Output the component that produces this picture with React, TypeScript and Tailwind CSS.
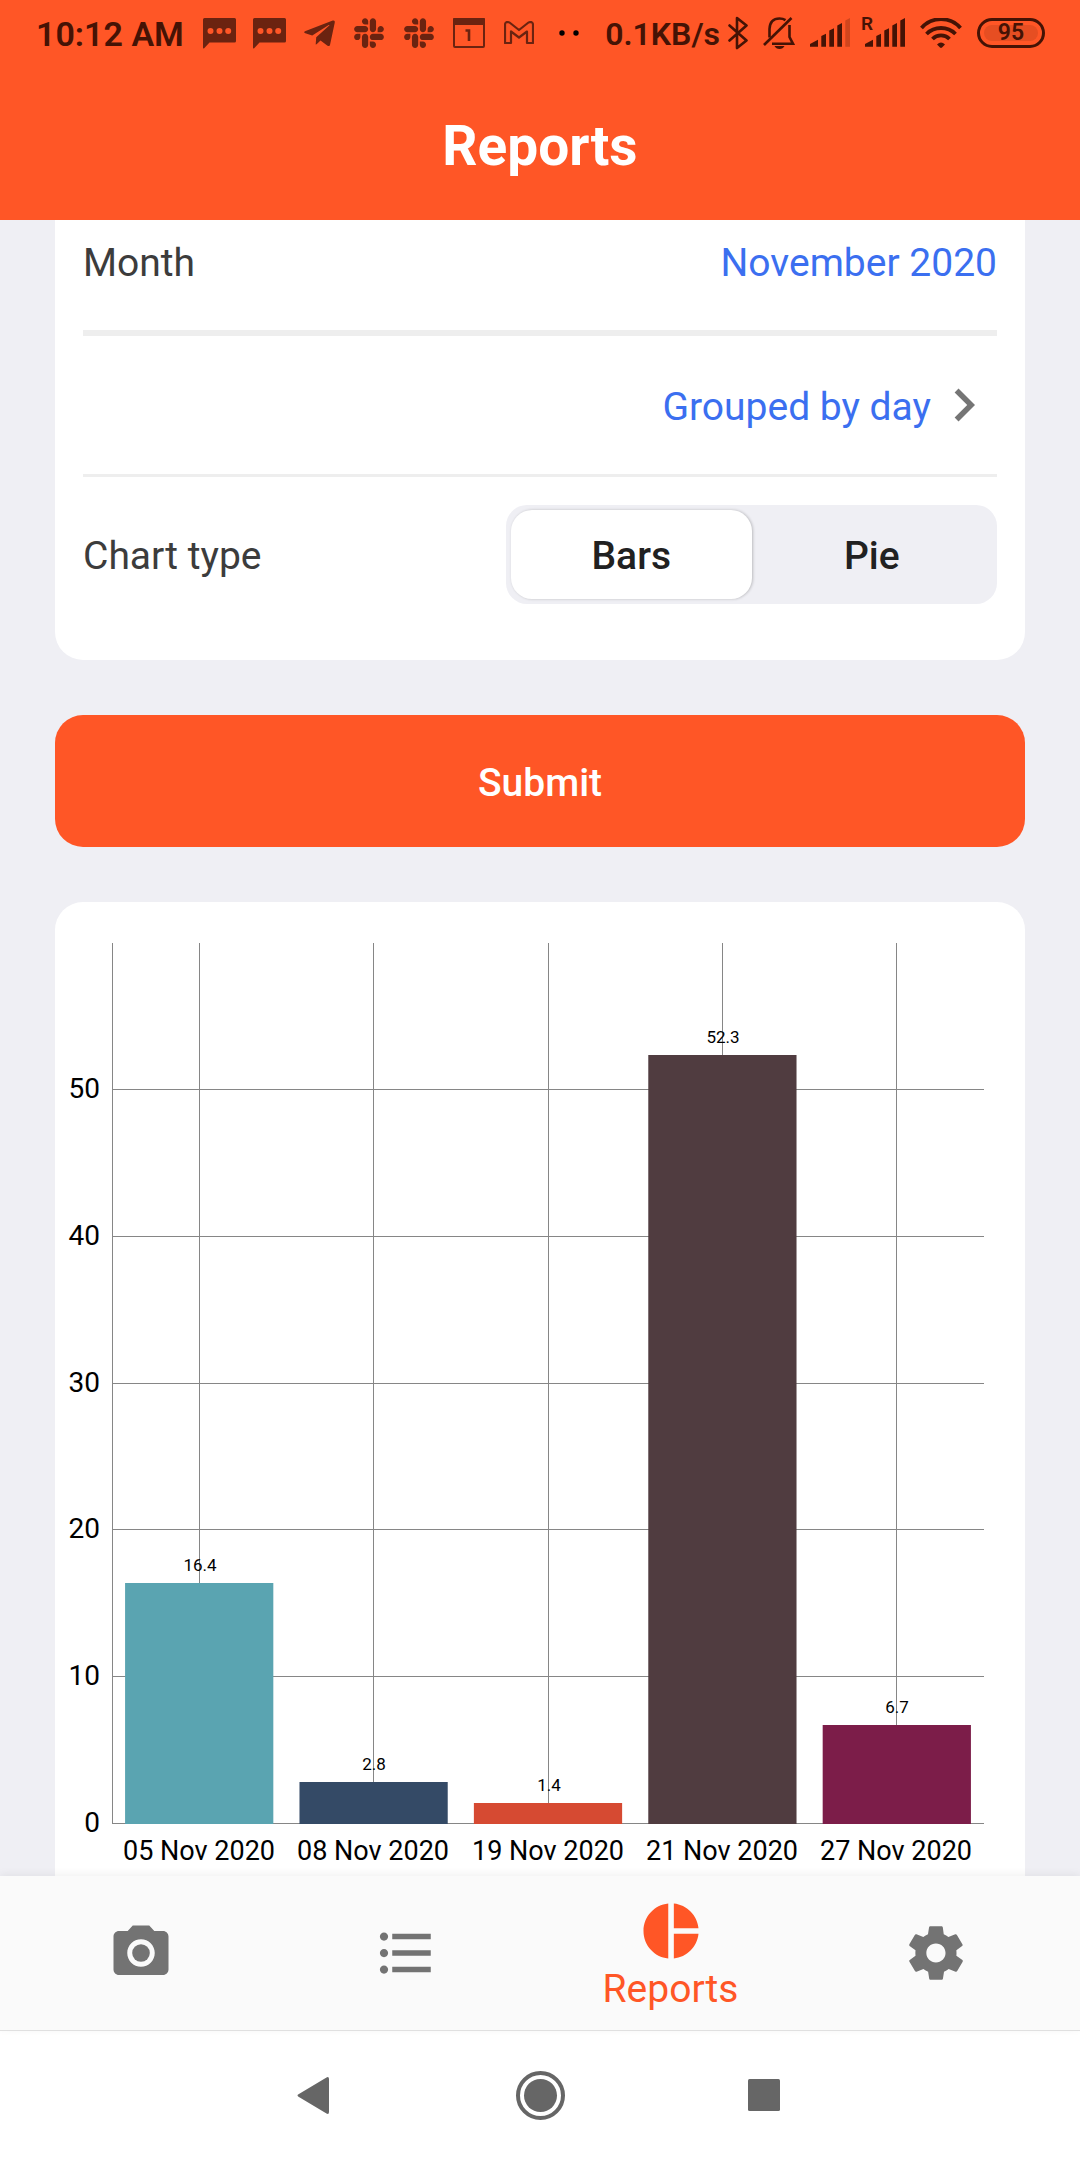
import { useState } from "react";
import type { ReactNode } from "react";
import { FaSlack, FaTelegramPlane } from "react-icons/fa";
import { IoMdSettings } from "react-icons/io";
import {
  MdChevronRight,
  MdFormatListBulleted,
  MdPhotoCamera,
  MdPieChart,
} from "react-icons/md";

function MessageIcon() {
  return (
    <svg width="33" height="31" viewBox="0 0 33 31" fill="currentColor">
      <path
        fillRule="evenodd"
        d="M1.500 0H31.500Q33 0 33 1.500V23Q33 24.500 31.500 24.500H6.500L1.200 30.300Q0 31 0 29.500V1.500Q0 0 1.500 0ZM7.500 10a3 3 0 1 0 0 6a3 3 0 1 0 0-6ZM16.500 10a3 3 0 1 0 0 6a3 3 0 1 0 0-6ZM25.200 10a3 3 0 1 0 0 6a3 3 0 1 0 0-6Z"
      />
    </svg>
  );
}

function CalendarIcon() {
  return (
    <svg width="32" height="30" viewBox="0 0 32 30" fill="none">
      <rect x="1" y="1" width="30" height="28" rx="1" stroke="currentColor" strokeWidth="2" />
      <rect width="32" height="7" rx="1" fill="currentColor" />
      <path d="M12.500 12.500H16V23" stroke="currentColor" strokeWidth="2.600" />
    </svg>
  );
}

function MailIcon() {
  return (
    <svg width="30" height="24" viewBox="0 0 30 24" fill="none">
      <path
        d="M1 22V3.500Q1.200 1 3.500 1L5.500 1.500L15 9L24.500 1.500L26.500 1Q28.800 1 29 3.500V22H23V10.500L15 16.500L7 10.500V22Z"
        stroke="currentColor"
        strokeWidth="2.200"
        strokeLinejoin="round"
      />
    </svg>
  );
}

function MoreIcon() {
  return (
    <svg width="20" height="6" viewBox="0 0 20 6" fill="#000">
      <circle cx="3" cy="3" r="2.700" />
      <circle cx="17" cy="3" r="2.700" />
    </svg>
  );
}

function BluetoothIcon() {
  return (
    <svg width="20" height="34" viewBox="0 0 20 34" fill="none" stroke="currentColor" strokeWidth="2.600" strokeLinejoin="round" strokeLinecap="round">
      <path d="M1.500 9.500L18.500 24.500L9 32V2L18.500 9.500L1.500 24.500" />
    </svg>
  );
}

function MutedBellIcon() {
  return (
    <svg width="32" height="32" viewBox="0 0 32 32" fill="none" stroke="currentColor" strokeWidth="2.600">
      <path d="M6.500 20.500V12Q7 1.500 16.500 1.500Q20 1.500 22.500 3.200" />
      <path d="M26.500 8V20L30 26.800H9" />
      <path d="M1 28L28.500 1" />
      <path d="M11.500 29H21.500Q20 32 16.500 32Q13 32 11.500 29Z" fill="currentColor" stroke="none" />
    </svg>
  );
}

function SignalIcon({ full = false }: { full?: boolean }) {
  return (
    <svg width="40" height="30" viewBox="0 0 40 30" fill="currentColor">
      <path d="M0 28.700V26L8 21.700V28.700Z" />
      <path d="M11.300 28.700V18L16 15.700V28.700Z" />
      <path d="M19.300 28.700V12.500L24 10.200V28.700Z" />
      <path d="M27.300 28.700V7.500L32 5V28.700Z" />
      <path d="M35.300 28.700V2.500L40 0V28.700Z" opacity={full ? 1 : 0.25} />
    </svg>
  );
}

function WifiIcon() {
  return (
    <svg width="42" height="30" viewBox="0 0 42 30" fill="none" stroke="currentColor" strokeWidth="3.800">
      <path d="M1.500 10A26 26 0 0 1 40.500 10" />
      <path d="M6.500 16A20.500 20.500 0 0 1 35.500 16" />
      <path d="M12.500 21A12 12 0 0 1 29.500 21" />
      <path d="M17 26.500Q21 22.500 25 26.500L22 29.500Q21 30.300 20 29.500Z" fill="currentColor" stroke="none" />
    </svg>
  );
}

function StatusBar() {
  const notifications: ReactNode[] = [
    <MessageIcon />,
    <MessageIcon />,
    <FaTelegramPlane size={35} />,
    <FaSlack size={34} />,
    <FaSlack size={34} />,
    <CalendarIcon />,
    <MailIcon />,
    <MoreIcon />,
  ];
  return (
    <div className="flex h-[66px] items-center justify-between pl-9 pr-[35px] text-[#451305]">
      <div className="flex items-center">
        <span className="w-[158px] pt-0.5 whitespace-nowrap text-[34px] leading-10 font-semibold">10:12 AM</span>
        <div className="flex items-center text-[#6b2310]">
          {notifications.map((icon, i) => (
            <span key={i} className="flex w-[50px] justify-center">
              {icon}
            </span>
          ))}
        </div>
      </div>
      <div className="flex items-center gap-[15px]">
        <div className="flex items-center gap-2">
          <span className="pt-0.5 text-[32px] leading-10 font-semibold">0.1KB/s</span>
          <BluetoothIcon />
        </div>
        <MutedBellIcon />
        <SignalIcon />
        <div className="relative">
          <SignalIcon full />
          <span className="absolute -top-1 -left-1 text-[19px] leading-5 font-semibold">R</span>
        </div>
        <WifiIcon />
        <span className="flex h-[30px] w-[68px] items-center rounded-full border-3 border-current p-1">
          <span className="flex h-full w-full items-center justify-center rounded-full bg-[#e64e22] text-[23px] leading-6 font-semibold">
            95
          </span>
        </span>
      </div>
    </div>
  );
}

const bars = [
  { label: "05 Nov 2020", value: 16.36, color: "#5aa4b1" },
  { label: "08 Nov 2020", value: 2.77, color: "#344a66" },
  { label: "19 Nov 2020", value: 1.35, color: "#d64a32" },
  { label: "21 Nov 2020", value: 52.34, color: "#503c40" },
  { label: "27 Nov 2020", value: 6.66, color: "#7c1d49" },
];

const chart = { left: 57, right: 929, top: 41, bottom: 921, max: 60 };

function BarChart() {
  const step = (chart.right - chart.left) / bars.length;
  const barWidth = step * 0.85;
  const yOf = (v: number) =>
    Math.floor(chart.bottom - (v / chart.max) * (chart.bottom - chart.top));
  const xOf = (i: number) => Math.floor(chart.left + step * (i + 0.5));
  return (
    <svg viewBox="0 0 970 974" className="block w-full" role="img" aria-label="Bar chart grouped by day">
      <g fill="#868686">
        {[0, 10, 20, 30, 40, 50].map((t) => (
          <rect key={t} x={chart.left} y={yOf(t)} width={chart.right - chart.left} height="1" />
        ))}
        <rect x={chart.left} y={chart.top} width="1" height={chart.bottom - chart.top} />
        {bars.map((b, i) => (
          <rect key={b.label} x={xOf(i)} y={chart.top} width="1" height={chart.bottom - chart.top} />
        ))}
      </g>
      {bars.map((b, i) => (
        <rect
          key={b.label}
          x={chart.left + step * (i + 0.5) - barWidth / 2}
          y={yOf(b.value)}
          width={barWidth}
          height={chart.bottom - yOf(b.value) + 1}
          fill={b.color}
        />
      ))}
      <g fontSize="28" textAnchor="end">
        {[0, 10, 20, 30, 40, 50].map((t) => (
          <text key={t} x="45" y={yOf(t) + 9}>
            {t}
          </text>
        ))}
      </g>
      <g fontSize="27" textAnchor="middle">
        {bars.map((b, i) => (
          <text key={b.label} x={xOf(i)} y="958">
            {b.label}
          </text>
        ))}
      </g>
      <g fontSize="17" textAnchor="middle">
        {bars.map((b, i) => (
          <text key={b.label} x={xOf(i) + 1} y={yOf(b.value) - 12}>
            {b.value.toFixed(1)}
          </text>
        ))}
      </g>
    </svg>
  );
}

function ChartTypeSwitch() {
  const [type, setType] = useState("Bars");
  return (
    <div className="flex h-[99px] w-[491px] rounded-[21px] bg-[#efeff4] p-[5px]">
      {["Bars", "Pie"].map((name) => (
        <button
          key={name}
          type="button"
          aria-pressed={type === name}
          onClick={() => setType(name)}
          className={
            type === name
              ? "flex-1 rounded-[21px] bg-white pt-1 text-[39px] font-medium text-[#212121] shadow-[1px_0_3px_rgba(0,0,0,0.22)]"
              : "flex-1 rounded-[21px] pt-1 text-[39px] font-medium text-[#212121]"
          }
        >
          {name}
        </button>
      ))}
    </div>
  );
}

export default function App() {
  return (
    <div className="flex h-screen flex-col overflow-hidden bg-[#efeff4] font-['Roboto',sans-serif]">
      <header className="shrink-0 bg-[#ff5626]">
        <StatusBar />
        <h1 className="pt-12 pb-[42px] text-center text-[55px] leading-[64px] font-bold text-white">Reports</h1>
      </header>

      <main className="flex min-h-0 flex-1 flex-col gap-[55px] overflow-hidden px-[55px]">
        <section className="shrink-0 rounded-b-[28px] bg-white px-7 pb-14 text-[39px] text-[#3c3c3c]">
          <div className="flex h-[116px] items-center justify-between border-b-6 border-[#eeeeee] pb-6">
            <span>Month</span>
            <button type="button" className="text-[#3b6ff0]">
              November 2020
            </button>
          </div>
          <div className="flex h-[141px] items-center justify-end border-b-3 border-[#eeeeee]">
            <button type="button" className="flex items-center text-[#3b6ff0]">
              <span className="pt-1">Grouped by day</span>
              <MdChevronRight size={66} className="text-[#757575]" />
            </button>
          </div>
          <div className="flex items-center justify-between pt-7">
            <span className="pt-1">Chart type</span>
            <ChartTypeSwitch />
          </div>
        </section>

        <button
          type="button"
          className="h-[132px] shrink-0 rounded-[28px] bg-[#ff5626] pt-1 text-[39px] font-medium text-white"
        >
          Submit
        </button>

        <section className="shrink-0 overflow-hidden rounded-t-[28px] bg-white">
          <BarChart />
        </section>
      </main>

      <nav className="relative grid h-[155px] shrink-0 grid-cols-4 border-b border-[#e0e0e0] bg-[#fafafa] pr-3 pl-2 text-[#737373] shadow-[0_-2px_8px_rgba(0,0,0,0.06)]">
        <a href="#camera" aria-label="Camera" className="flex items-center justify-center">
          <MdPhotoCamera size={66} />
        </a>
        <a href="#list" aria-label="List" className="flex items-center justify-center">
          <MdFormatListBulleted size={66} />
        </a>
        <a href="#reports" aria-current="page" className="flex flex-col items-center justify-center pt-[5px] text-[39px] leading-[50px] text-[#ff5626]">
          <MdPieChart size={66} />
          Reports
        </a>
        <a href="#settings" aria-label="Settings" className="flex items-center justify-center">
          <IoMdSettings size={66} />
        </a>
      </nav>

      <footer className="flex h-[129px] shrink-0 items-center justify-center gap-[178px] bg-white text-[#666666]">
        <button type="button" aria-label="Back">
          <svg width="48" height="49" viewBox="0 0 48 49" fill="currentColor">
            <path d="M8.500 23.300L36.500 6.400Q39 5.300 39 8V41Q39 43.700 36.500 42.600L8.500 25.700Q6.500 24.500 8.500 23.300Z" />
          </svg>
        </button>
        <button type="button" aria-label="Home">
          <svg width="49" height="49" viewBox="0 0 49 49">
            <circle cx="24.500" cy="24.500" r="22.500" fill="none" stroke="currentColor" strokeWidth="4" />
            <circle cx="24.500" cy="24.500" r="16.500" fill="currentColor" />
          </svg>
        </button>
        <button type="button" aria-label="Recent apps">
          <svg width="48" height="49" viewBox="0 0 48 49" fill="currentColor">
            <rect x="5" y="8" width="32" height="32" rx="1.500" />
          </svg>
        </button>
      </footer>
    </div>
  );
}
